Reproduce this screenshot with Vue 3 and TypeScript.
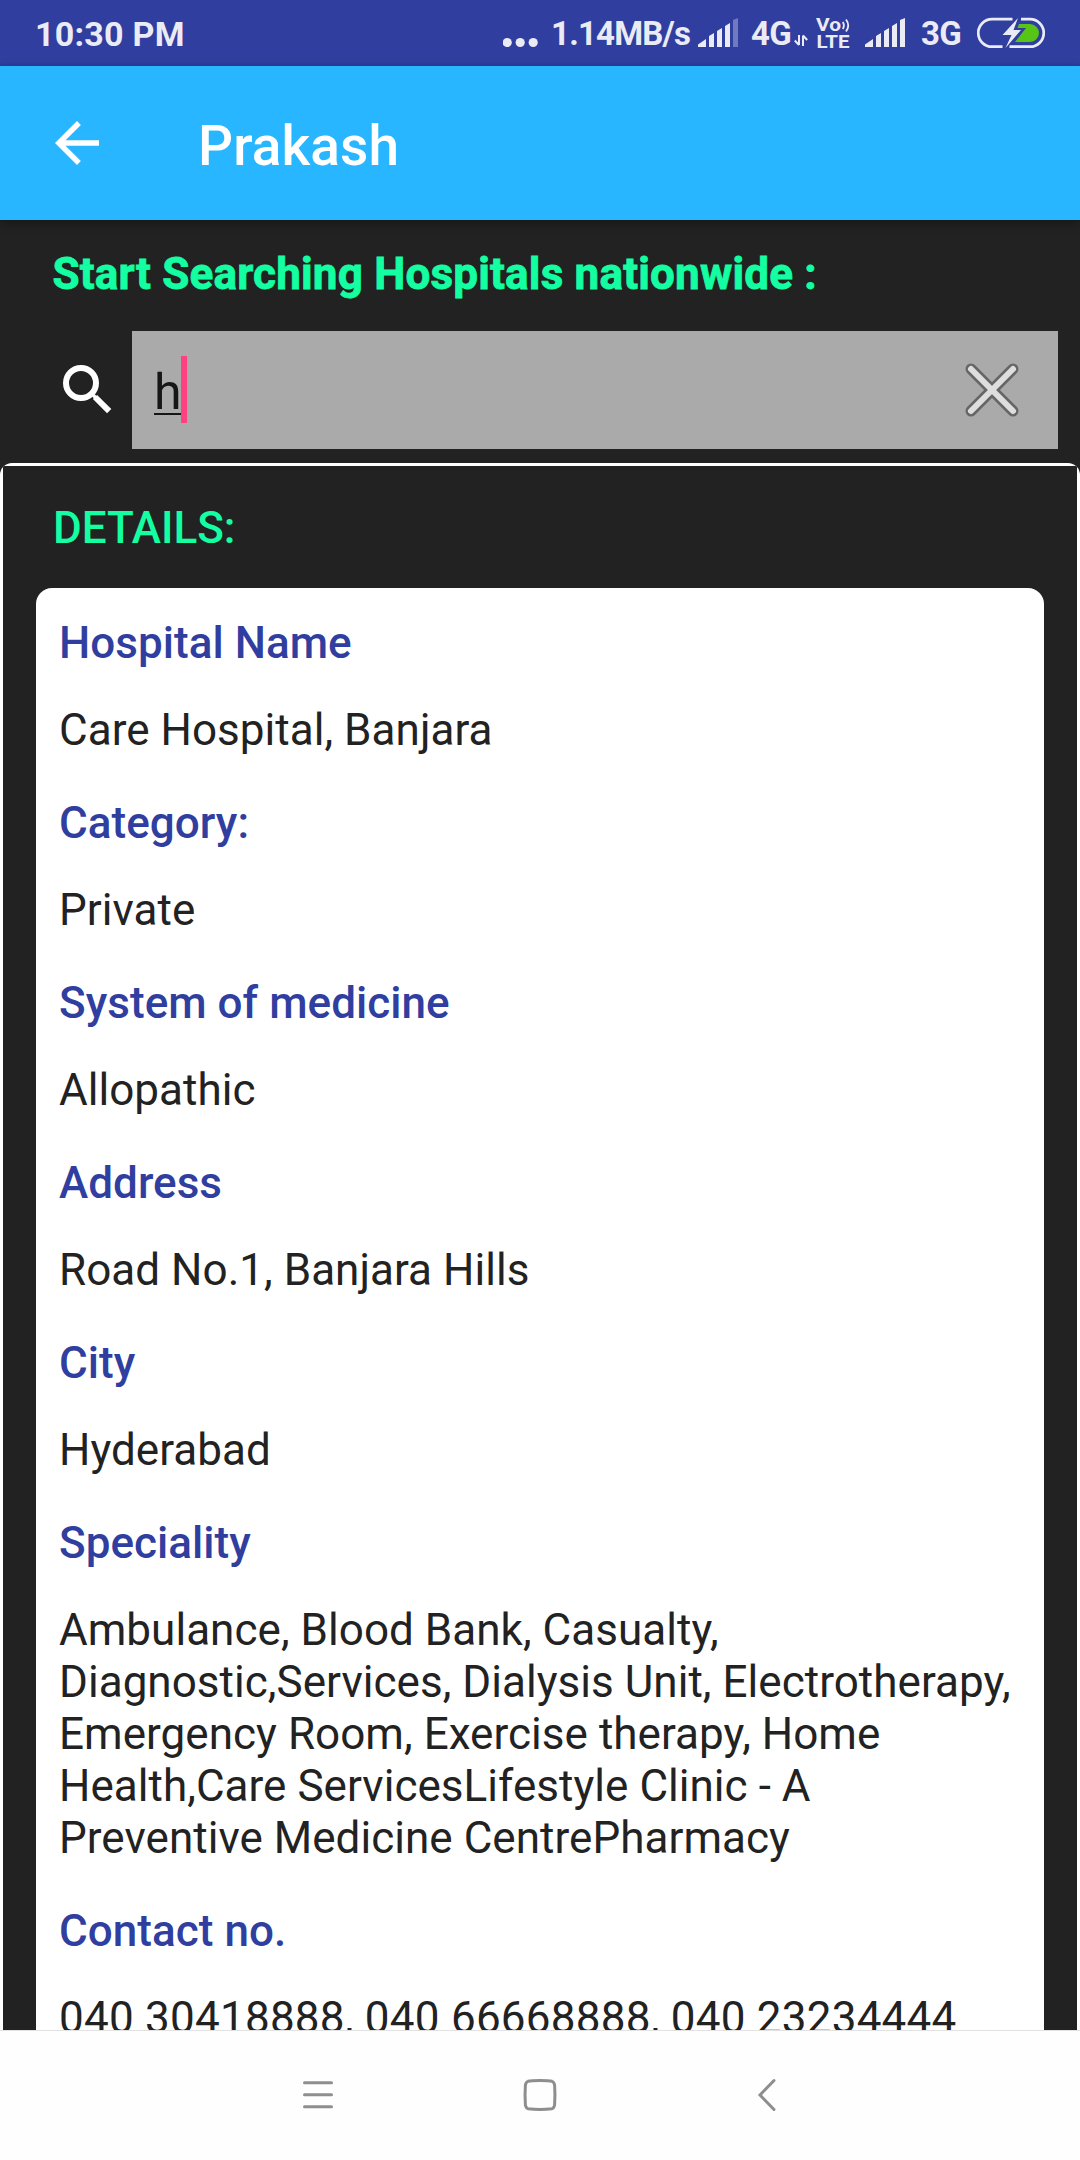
<script setup lang="ts">
interface Field {
  label: string
  value: string
  numeric?: boolean
}

const fields: Field[] = [
  { label: 'Hospital Name', value: 'Care Hospital, Banjara' },
  { label: 'Category:', value: 'Private' },
  { label: 'System of medicine', value: 'Allopathic' },
  { label: 'Address', value: 'Road No.1, Banjara Hills' },
  { label: 'City', value: 'Hyderabad' },
  {
    label: 'Speciality',
    value:
      'Ambulance, Blood Bank, Casualty, Diagnostic,Services, Dialysis Unit, Electrotherapy, Emergency Room, Exercise therapy, Home Health,Care ServicesLifestyle Clinic - A Preventive Medicine CentrePharmacy',
  },
  { label: 'Contact no.', value: '040 30418888, 040 66668888, 040 23234444', numeric: true },
]
</script>

<template>
  <div class="screen">
    <header class="status">
      <span class="time">10:30 PM</span>
      <div class="indicators">
        <svg class="dots" width="36" height="66" viewBox="0 0 36 66">
          <circle cx="4.2" cy="42.5" r="4.6" />
          <circle cx="17.2" cy="42.5" r="4.6" />
          <circle cx="30.2" cy="42.5" r="4.6" />
        </svg>
        <span class="speed">1.14MB/s</span>
        <svg class="signal" width="40" height="66" viewBox="0 0 40 66">
          <path d="M0 47V44.5L8 39V47ZM11 47V36L16 33V47ZM19 47V31L24 28V47ZM27 47V26L32 23V47Z" />
          <path class="faded" d="M35 47V20L40 18V47Z" />
        </svg>
        <span class="net first">4G</span>
        <svg class="arrows" width="14" height="66" viewBox="0 0 14 66">
          <path d="M5 35V45M5 45L.8 40.5M9 46V35.5M9 35.5L13.2 40" />
        </svg>
        <svg class="volte" width="34" height="66" viewBox="0 0 34 66">
          <text x="0" y="30.7" textLength="25" lengthAdjust="spacingAndGlyphs">Vo</text>
          <text x="0.5" y="47.7" textLength="33" lengthAdjust="spacingAndGlyphs">LTE</text>
          <path d="M26.8 22Q29 25.5 26.8 29M30 19.5Q34.5 25.5 30 31.5" />
        </svg>
        <svg class="signal second" width="40" height="66" viewBox="0 0 40 66">
          <path d="M0 47V44.5L8 39V47ZM11 47V36L16 33V47ZM19 47V31L24 28V47ZM27 47V26L32 23V47ZM35 47V20L40 18V47Z" />
        </svg>
        <span class="net last">3G</span>
        <svg class="battery" width="68" height="66" viewBox="0 0 68 66">
          <path class="shell" d="M35.5 19.2H15A13.7 13.7 0 0 0 15 46.7H25.5" />
          <path class="shell" d="M44 19.2H53A13.7 13.7 0 0 1 53 46.7H32.5" />
          <path class="charge" d="M42 24H53A9 9 0 0 1 53 42H38L49 28H40.5Z" />
          <path class="bolt" d="M41 18L25.5 35H34.5L28.5 48L44 30H36.5Z" />
        </svg>
      </div>
    </header>

    <div class="appbar">
      <svg class="back" width="66" height="66" viewBox="0 0 24 24">
        <path d="M20 11H7.83l5.59-5.59L12 4l-8 8 8 8 1.41-1.41L7.83 13H20v-2z" />
      </svg>
      <h1>Prakash</h1>
    </div>

    <main>
      <h2 class="prompt">Start Searching Hospitals nationwide :</h2>
      <div class="search">
        <svg class="lens" width="50" height="50" viewBox="0 0 50 50">
          <circle cx="18" cy="18" r="15" />
          <path d="M32 32L46.2 46.2" />
          <path class="neck" d="M28 28L33 33" />
        </svg>
        <div class="field">
          <span class="typed">h</span>
          <span class="caret"></span>
          <svg class="clear" width="56" height="56" viewBox="0 0 56 56">
            <path class="rim" d="M7 7L49 49M49 7L7 49" />
            <path class="core" d="M7 7L49 49M49 7L7 49" />
          </svg>
        </div>
      </div>

      <section class="panel">
        <div class="inner">
          <h3>DETAILS:</h3>
          <dl class="card">
            <template v-for="f in fields" :key="f.label">
              <dt>{{ f.label }}</dt>
              <dd :class="{ numeric: f.numeric }">{{ f.value }}</dd>
            </template>
          </dl>
        </div>
      </section>
    </main>

    <nav>
      <svg width="36" height="36" viewBox="0 0 36 36">
        <path d="M4.5 5.7H31.5M4.5 17.7H31.5M4.5 29.7H31.5" />
      </svg>
      <svg width="36" height="36" viewBox="0 0 36 36">
        <path d="M18 3.5Q27 3.5 30 4.3Q32 5 32.6 8Q33.3 18 32.6 28Q32 31 30 31.7Q18 33.3 6 31.7Q4 31 3.4 28Q2.7 18 3.4 8Q4 5 6 4.3Q9 3.5 18 3.5Z" />
      </svg>
      <svg width="36" height="36" viewBox="0 0 36 36">
        <path d="M30 3.5L16 18L30 32.5" />
      </svg>
    </nav>
  </div>
</template>

<style>
body {
  margin: 0;
}
</style>

<style scoped>
.screen {
  width: 1080px;
  height: 2160px;
  display: flex;
  flex-direction: column;
  overflow: hidden;
  background: #222;
  font-family: Roboto, 'Noto Sans', sans-serif;
}
h1,
h2,
h3,
dl,
dd {
  margin: 0;
}
svg {
  display: block;
  flex: none;
}
.status {
  height: 66px;
  flex: none;
  display: flex;
  justify-content: space-between;
  background: #303e9f;
  color: #ebebf6;
  fill: #ebebf6;
  font-size: 33px;
  font-weight: 700;
  line-height: 68px;
  letter-spacing: -0.6px;
  white-space: nowrap;
}
.time {
  margin-left: 35px;
  font-size: 34px;
  line-height: 69px;
  letter-spacing: 0.25px;
}
.indicators {
  display: flex;
  margin-right: 35px;
}
.speed {
  width: 138px;
  margin-left: 12.5px;
  margin-right: 9px;
  letter-spacing: -0.8px;
}
.faded {
  opacity: 0.35;
}
.net {
  width: 40px;
}
.net.first {
  margin-left: 13px;
}
.net.last {
  margin-left: 16px;
  width: 56px;
}
.arrows {
  margin-left: 3px;
  fill: none;
  stroke: #ebebf6;
  stroke-width: 2;
}
.volte {
  margin-left: 8px;
}
.volte text {
  font-size: 18px;
  font-weight: 700;
  letter-spacing: 0;
}
.volte path {
  fill: none;
  stroke: #ebebf6;
  stroke-width: 1.8;
}
.signal.second {
  margin-left: 15px;
}
.battery .shell {
  fill: none;
  stroke: #ebebf6;
  stroke-width: 2.7;
}
.battery .charge {
  fill: #56c516;
}
.appbar {
  height: 154px;
  flex: none;
  display: flex;
  align-items: center;
  background: #27b6ff;
  box-shadow: 0 3px 10px rgba(0, 0, 0, 0.35);
  z-index: 1;
}
.back {
  margin-left: 44px;
  fill: #fff;
}
h1 {
  margin-left: 88px;
  padding-top: 5px;
  color: #fff;
  font-size: 55px;
  font-weight: 500;
  line-height: 64px;
  letter-spacing: 0.1px;
}
main {
  flex: 1;
  min-height: 0;
  display: flex;
  flex-direction: column;
  overflow: hidden;
}
.prompt {
  margin: 28px 0 31px 52.5px;
  color: #14ffa1;
  font-size: 44px;
  font-weight: 700;
  line-height: 52px;
  letter-spacing: 0.19px;
  -webkit-text-stroke: 0.8px #14ffa1;
  white-space: nowrap;
}
.search {
  display: flex;
  align-items: center;
  height: 118px;
  flex: none;
  padding: 0 22px 0 63px;
}
.lens {
  margin-right: 19px;
  fill: none;
  stroke: #fff;
  stroke-width: 6;
}
.lens .neck {
  stroke-width: 3.5;
}
.field {
  flex: 1;
  height: 118px;
  display: flex;
  align-items: center;
  background: #aaa;
}
.typed {
  margin-left: 22px;
  width: 27px;
  height: 50px;
  box-sizing: border-box;
  border-bottom: 2px solid #161616;
  color: #161616;
  font-size: 50px;
  line-height: 54px;
}
.caret {
  width: 6px;
  height: 67px;
  margin-bottom: 1px;
  background: #ff4081;
}
.clear {
  margin-left: auto;
  margin-right: 38px;
  fill: none;
  stroke-linecap: round;
}
.rim {
  stroke: #666;
  stroke-width: 11;
}
.core {
  stroke: #dedede;
  stroke-width: 6;
}
.panel {
  flex: 1;
  min-height: 0;
  margin-top: 14px;
  padding: 3px 3px 0;
  background: #fff;
  border-radius: 12px 12px 0 0;
  overflow: hidden;
}
.inner {
  height: 100%;
  padding: 0 33px;
  background: #222;
}
h3 {
  padding: 36px 0 34px 17px;
  color: #14ffa1;
  font-size: 44px;
  font-weight: 500;
  line-height: 52px;
}
.card {
  height: 1500px;
  box-sizing: border-box;
  padding: 29px 22px 0 23px;
  background: #fff;
  border-radius: 16px;
  font-size: 44px;
  line-height: 52px;
  letter-spacing: 0.04px;
}
dt {
  color: #303f9f;
  font-weight: 500;
}
dd {
  padding: 35px 0 41px;
  color: #222;
}
.numeric {
  letter-spacing: 0.24px;
}
nav {
  height: 130px;
  flex: none;
  box-sizing: border-box;
  display: flex;
  justify-content: center;
  gap: 186px;
  padding-top: 46px;
  border-top: 1px solid #e2e2e2;
  background: #fefefe;
  fill: none;
  stroke: #8e8e8e;
  stroke-width: 3;
  stroke-linecap: round;
}
</style>
